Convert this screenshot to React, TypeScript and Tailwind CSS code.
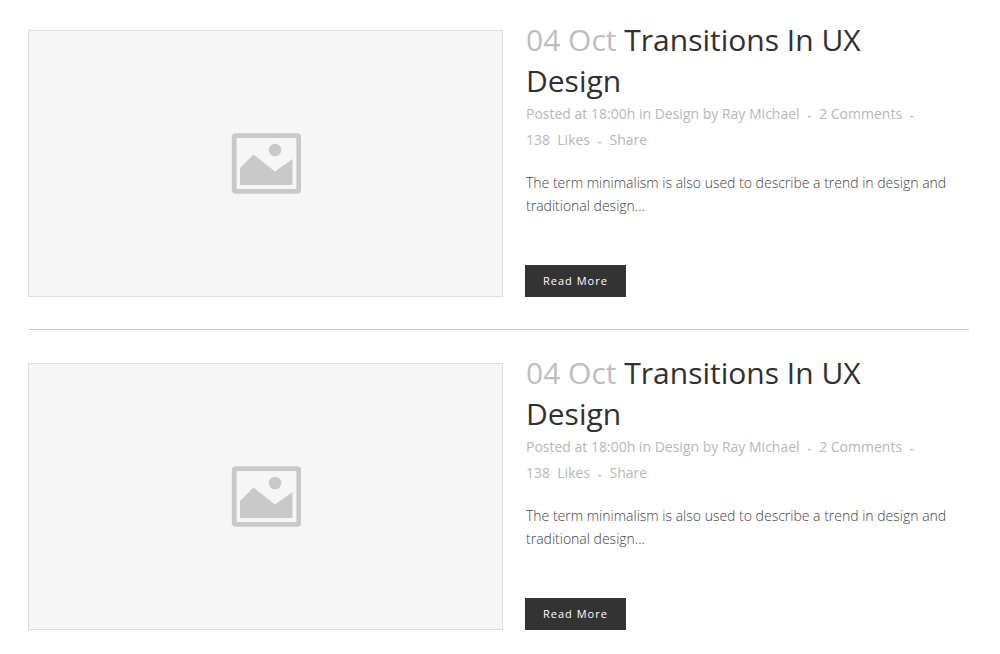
const ids = [1, 2];

function Placeholder() {
  return (
    <svg viewBox="0 0 71 61" className="h-[61px] w-[71px]" role="img" aria-label="Image placeholder">
      <rect x="4.2" y="2.700" width="64.500" height="55.600" rx="1.500" fill="none" stroke="#c9c9c9" strokeWidth="4.800" />
      <circle cx="45" cy="17" r="6.300" fill="#c9c9c9" />
      <path d="M10 52V35L23.500 21.500L45 38.500L62.500 26V52Z" fill="#c9c9c9" />
    </svg>
  );
}

function Separator() {
  return <span className="text-[11px] leading-5 font-bold">-</span>;
}

function Post() {
  return (
    <article className="flex gap-[22px]">
      <div className="flex h-[267px] w-[475px] shrink-0 items-center justify-center border border-[#dddddd] bg-[#f6f6f6]">
        <Placeholder />
      </div>
      <div className="flex min-w-0 flex-1 flex-col items-start pr-4">
        <h2 className="-mt-[11px] pl-px text-[30px] leading-[41px] text-[#303030]">
          <span className="text-[#bebebe]">04 Oct</span> Transitions In UX Design
        </h2>
        <div className="flex flex-wrap items-baseline gap-x-2 pl-px text-[14px] leading-[26px] text-[#b8b8b8]">
          <p>
            Posted at 18:00h in <a href="#design">Design</a> by <a href="#author">Ray Michael</a>
          </p>
          <Separator />
          <a href="#comments">2 Comments</a>
          <Separator />
          <a href="#likes" className="whitespace-nowrap">138 &nbsp;Likes</a>
          <Separator />
          <a href="#share">Share</a>
        </div>
        <p className="mt-[18px] pl-px text-[14px] leading-[23px] font-light text-[#444444]">
          The term minimalism is also used to describe a trend in design and traditional design...
        </p>
        <a href="#post" className="mt-auto bg-[#333333] px-[18px] text-[11px] leading-8 tracking-[1px] text-white">
          Read More
        </a>
      </div>
    </article>
  );
}

export default function App() {
  return (
    <main className="bg-white pt-[30px] pr-[31px] pb-6 pl-7 font-['Open_Sans',sans-serif]">
      {ids.map((id) => (
        <div key={id} className="group">
          <Post />
          <hr className="mt-8 mb-[33px] ml-px border-[#c8c8c8] group-last:hidden" />
        </div>
      ))}
    </main>
  );
}
